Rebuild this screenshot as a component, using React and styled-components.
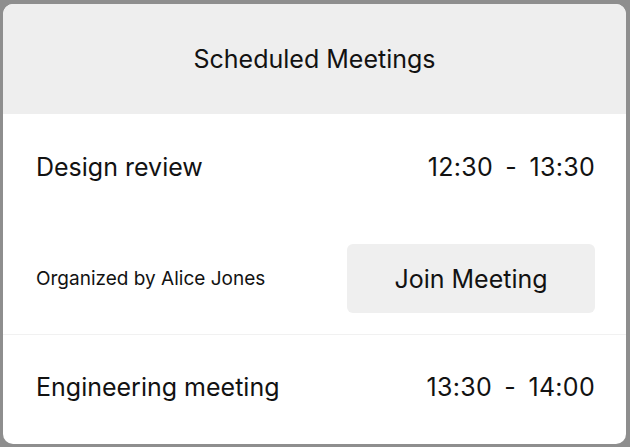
import React from "react";
import styled, { createGlobalStyle } from "styled-components";

const GlobalStyle = createGlobalStyle`
  html, body {
    margin: 0;
    padding: 0;
    background-color: #8e8e8e;
  }

  body {
    padding: 4px 4px 3px 3px;
    font-family: Inter, "Liberation Sans", sans-serif;
    color: #121212;
  }
`;

const Card = styled.div`
  width: 623px;
  height: 440px;
  background-color: #ffffff;
  border-radius: 10px;
  overflow: hidden;
  display: flex;
  flex-direction: column;
`;

const Header = styled.header`
  display: flex;
  align-items: center;
  justify-content: center;
  height: 110px;
  flex-shrink: 0;
  background-color: #eeeeee;
  font-size: 25px;
`;

const MeetingItem = styled.div`
  display: flex;
  flex-direction: column;
  padding: 0 31px ${({ expanded }) => (expanded ? "21px" : "0")} 33px;
  border-bottom: ${({ divider }) => (divider ? "1px solid #f1f1f1" : "none")};
`;

const TopRow = styled.div`
  display: flex;
  align-items: center;
  justify-content: space-between;
  height: ${({ tall }) => (tall ? "106px" : "104px")};
  font-size: 25px;
`;

const Title = styled.span``;

const Time = styled.span`
  letter-spacing: 0.3px;
  word-spacing: 5px;
`;

const BottomRow = styled.div`
  display: flex;
  align-items: center;
  justify-content: space-between;
  margin-top: 24px;
`;

const Organizer = styled.span`
  font-size: 19px;
`;

const JoinButton = styled.button`
  width: 248px;
  height: 69px;
  border: none;
  border-radius: 6px;
  background-color: #efefef;
  font-family: inherit;
  font-size: 25px;
  color: #121212;
  cursor: pointer;
`;

const meetings = [
  {
    title: "Design review",
    time: "12:30 - 13:30",
    organizer: "Alice Jones",
    expanded: true,
  },
  {
    title: "Engineering meeting",
    time: "13:30 - 14:00",
  },
];

export default function App() {
  return (
    <>
      <GlobalStyle />
      <Card>
        <Header>Scheduled Meetings</Header>
        {meetings.map((m, i) => (
          <MeetingItem
            key={m.title}
            expanded={m.expanded}
            divider={i < meetings.length - 1}
          >
            <TopRow tall={m.expanded}>
              <Title>{m.title}</Title>
              <Time>{m.time}</Time>
            </TopRow>
            {m.expanded && (
              <BottomRow>
                <Organizer>Organized by {m.organizer}</Organizer>
                <JoinButton>Join Meeting</JoinButton>
              </BottomRow>
            )}
          </MeetingItem>
        ))}
      </Card>
    </>
  );
}
